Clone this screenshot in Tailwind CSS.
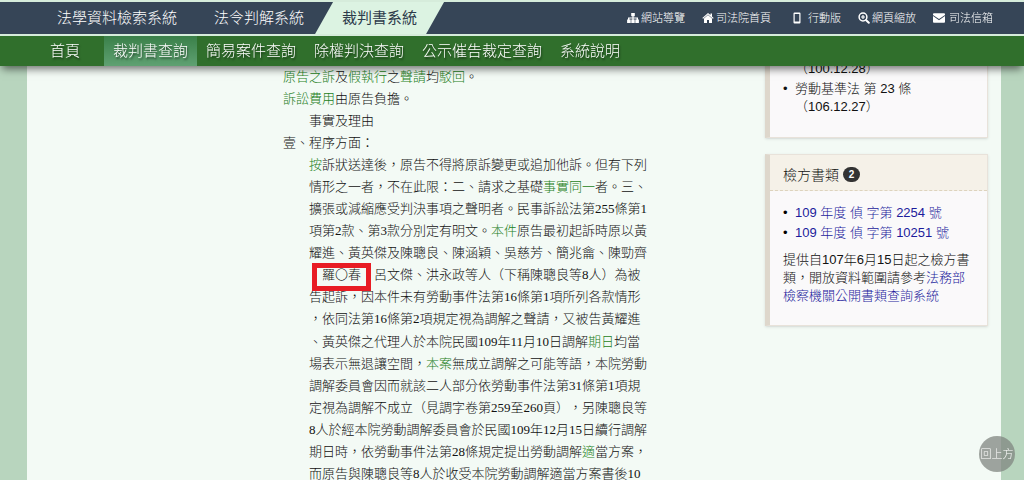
<!DOCTYPE html>
<html lang="zh-Hant">
<head>
  <meta charset="UTF-8">
  <meta name="viewport" content="width=device-width, initial-scale=1.0">
  <title>裁判書系統</title>
  <script src="https://cdn.jsdelivr.net/npm/@tailwindcss/browser@4"></script>
</head>
<body class="h-screen overflow-hidden bg-[#b8d5be] font-['Liberation_Sans','Noto_Sans_CJK_TC',sans-serif] text-[13px] font-light text-[#111] [text-spacing-trim:space-all]">
  <!-- Header -->
  <header class="fixed inset-x-0 top-0 z-10 bg-[#d6ecdb] pt-[2px] shadow-[0_5px_8px_-2px_rgba(0,0,0,0.55)]">
    <div class="flex h-8 items-stretch justify-between bg-[#364557] pr-[31px] text-white">
      <nav class="flex items-center pl-[57px] text-[15px]">
        <a href="#">法學資料檢索系統</a>
        <a href="#" class="ml-[37px]">法令判解系統</a>
        <a href="#" class="ml-[11px] flex h-full w-[129px] items-center justify-center bg-[#dcf3e2] font-normal text-[#2d3b4b] [clip-path:polygon(18px_0,100%_0,calc(100%-18px)_100%,0_100%)]">裁判書系統</a>
      </nav>
      <ul class="flex items-center gap-[17px] text-[11px]">
        <li>
          <a href="#" class="flex items-center gap-[2px]">
            <svg class="h-3 w-3" viewBox="0 0 12 12" fill="currentColor">
              <path d="M4.2 1h3.600v3.200H6.600v1.400h4.400v2h.9V11H8.300V7.600h1.300V6.600H6.600v1h1.100V11H4.300V7.600h1.100v-1H2.400v1h1.300V11H.1V7.600H1v-2h4.400V4.200H4.200z" />
            </svg>
            網站導覽
          </a>
        </li>
        <li>
          <a href="#" class="flex items-center gap-[2px]">
            <svg class="h-3 w-3" viewBox="0 0 12 12" fill="currentColor">
              <path d="M6 1 .3 6l.8.8L6 2.600l4.900 4.200.8-.8-1.700-1.500V1.600H8.500v1.500z" />
              <path d="M6 3.100 2 6.500V11h3V8h2v3h3V6.500z" />
            </svg>
            司法院首頁
          </a>
        </li>
        <li>
          <a href="#" class="flex items-center gap-[2px]">
            <svg class="h-3 w-[18px]" viewBox="0 0 18 12" fill="currentColor">
              <path fill-rule="evenodd" d="M6.500.5h5a1 1 0 0 1 1 1v9a1 1 0 0 1-1 1h-5a1 1 0 0 1-1-1v-9a1 1 0 0 1 1-1zM6.700 2v7.400h4.600V2z" />
            </svg>
            行動版
          </a>
        </li>
        <li>
          <a href="#" class="flex items-center gap-[2px]">
            <svg class="h-3 w-3" viewBox="0 0 12 12" fill="none" stroke="currentColor">
              <circle cx="5" cy="5" r="3.900" stroke-width="1.500" />
              <path stroke-width="1.200" d="M5 3v4M3 5h4" />
              <path stroke-linecap="round" stroke-width="2" d="m8.200 8.200 2.600 2.600" />
            </svg>
            網頁縮放
          </a>
        </li>
        <li>
          <a href="#" class="flex items-center gap-1">
            <svg class="h-3 w-3" viewBox="0 0 12 12" fill="currentColor">
              <path d="M0 2.200A.9.900 0 0 1 .9 1.300h10.200a.9.900 0 0 1 .9.900v.7L6 7 0 2.900z" />
              <path d="M0 4.100 6 8.200l6-4.100v5.700a.9.900 0 0 1-.9.900H.9a.9.900 0 0 1-.9-.9z" />
            </svg>
            司法信箱
          </a>
        </li>
      </ul>
    </div>

    <nav class="mt-[2px] flex h-[30px] items-stretch bg-[#306f2c] pl-[41px] text-[15px] text-white [text-shadow:1px_2px_2px_rgba(0,0,0,0.5)]">
      <a href="#" class="mr-[15px] flex items-center px-[9px]">首頁</a>
      <a href="#" class="flex items-center bg-linear-to-b from-[#3a8049] to-[#5fa172] px-[9px]">裁判書查詢</a>
      <a href="#" class="flex items-center px-[9px]">簡易案件查詢</a>
      <a href="#" class="flex items-center px-[9px]">除權判決查詢</a>
      <a href="#" class="flex items-center px-[9px]">公示催告裁定查詢</a>
      <a href="#" class="flex items-center px-[9px]">系統說明</a>
    </nav>
  </header>

  <!-- Content -->
  <main class="mr-[23px] ml-[27px] flex min-h-screen items-start justify-between bg-[#f3faf5] pr-[13px] pl-64">
    <article class="pt-[66px] font-['Liberation_Serif','Noto_Sans_CJK_TC',serif] leading-[22px] whitespace-nowrap">
      <p><a href="#" class="text-[#1c7f22]">原告之訴</a>及<a href="#" class="text-[#1c7f22]">假執行</a>之<a href="#" class="text-[#1c7f22]">聲請</a>均<a href="#" class="text-[#1c7f22]">駁回</a>。</p>
      <p><a href="#" class="text-[#1c7f22]">訴訟費用</a>由原告負擔。</p>
      <p class="pl-[26px]">事實及理由</p>
      <p>壹、程序方面：</p>
      <p class="pl-[26px]">
        <a href="#" class="text-[#1c7f22]">按</a>訴狀送達後，原告不得將原訴變更或追加他訴。但有下列<br>
        情形之一者，不在此限：二、請求之基礎<a href="#" class="text-[#1c7f22]">事實同一</a>者。三、<br>
        擴張或減縮應受判決事項之聲明者。民事訴訟法第255條第1<br>
        項第2款、第3款分別定有明文。<a href="#" class="text-[#1c7f22]">本件</a>原告最初起訴時原以黃<br>
        耀進、黃英傑及陳聰良、陳涵穎、吳慈芳、簡兆龠、陳勁齊<br>
        　<span class="relative">羅〇春<span class="absolute -inset-x-[10px] -top-1 h-7 border-5 border-[#e81c24]"></span></span>　呂文傑、洪永政等人（下稱陳聰良等8人）為被<br>
        告起訴，因本件未有勞動事件法第16條第1項所列各款情形<br>
        ，依同法第16條第2項規定視為調解之聲請，又被告黃耀進
      </p>
      <p class="mt-px pl-[26px]">
        、黃英傑之代理人於本院民國109年11月10日調解<a href="#" class="text-[#1c7f22]">期日</a>均當<br>
        場表示無退讓空間，<a href="#" class="text-[#1c7f22]">本案</a>無成立調解之可能等語，本院勞動<br>
        調解委員會因而就該二人部分依勞動事件法第31條第1項規<br>
        定視為調解不成立（見調字卷第259至260頁），另陳聰良等<br>
        8人於經本院勞動調解委員會於民國109年12月15日續行調解<br>
        期日時，依勞動事件法第28條規定提出勞動調解<a href="#" class="text-[#1c7f22]">適</a>當方案，<br>
        而原告與陳聰良等8人於收受本院勞動調解適當方案書後10
      </p>
    </article>

    <!-- Sidebar -->
    <aside class="w-[223px] leading-[18px]">
      <section class="h-[138px] border border-l-5 border-[#e8e2da] border-l-[#ded7cc] bg-[#faf9fa] pt-[59px] pl-[13px] shadow-sm">
        <ul class="space-y-[2px]">
          <li class="pl-3">（100.12.28）</li>
          <li class="flex before:w-3 before:content-['•']">勞動基準法 第 23 條<br>（106.12.27）</li>
        </ul>
      </section>

      <section class="mt-4 border border-l-5 border-[#e8e2da] border-l-[#ded7cc] bg-[#faf9fa] shadow-sm">
        <h3 class="flex h-9 items-center gap-1 border-b border-dashed border-[#ddd3bd] bg-[#f5f1e8] pt-1 pl-[13px] text-[14px]">
          檢方書類
          <span class="flex h-[15px] w-[17px] items-center justify-center rounded-full bg-[#333] text-[10px] font-bold text-white">2</span>
        </h3>
        <div class="pt-[13px] pr-[14px] pb-5 pl-[13px]">
          <ul class="space-y-[2px] text-[#1c1c9c]">
            <li class="flex before:w-3 before:text-black before:content-['•']"><a href="#">109 年度 偵 字第 2254 號</a></li>
            <li class="flex before:w-3 before:text-black before:content-['•']"><a href="#">109 年度 偵 字第 10251 號</a></li>
          </ul>
          <p class="mt-[9px]">提供自107年6月15日起之檢方書類，開放資料範圍請參考<a href="#" class="text-[#1c1c9c]">法務部檢察機關公開書類查詢系統</a></p>
        </div>
      </section>
    </aside>
  </main>

  <!-- Back to top -->
  <button class="fixed right-[9px] bottom-2 z-10 size-9 rounded-full bg-[#808580]/75 text-[11px] text-white">回上方</button>
</body>
</html>
